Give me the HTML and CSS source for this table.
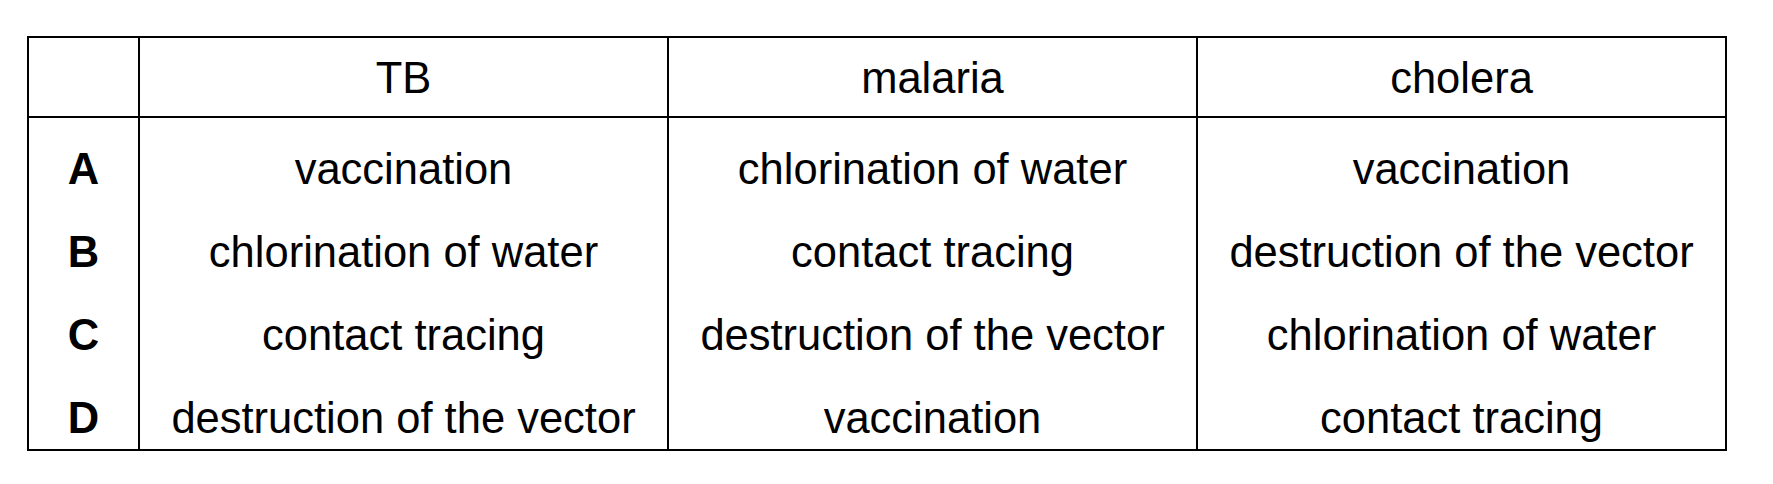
FILE: index.html
```html
<!DOCTYPE html>
<html lang="en">
<head>
<meta charset="utf-8">
<title>Disease control table</title>
<link rel="stylesheet" href="styles.css">
</head>
<body>
<div class="page">
  <div class="grid">
    <div class="cell head first"></div>
    <div class="cell head">TB</div>
    <div class="cell head">malaria</div>
    <div class="cell head">cholera</div>

    <div class="cell key first row1">A</div>
    <div class="cell row1">vaccination</div>
    <div class="cell row1">chlorination of water</div>
    <div class="cell row1">vaccination</div>

    <div class="cell key first">B</div>
    <div class="cell">chlorination of water</div>
    <div class="cell">contact tracing</div>
    <div class="cell">destruction of the vector</div>

    <div class="cell key first">C</div>
    <div class="cell">contact tracing</div>
    <div class="cell">destruction of the vector</div>
    <div class="cell">chlorination of water</div>

    <div class="cell key first last">D</div>
    <div class="cell last">destruction of the vector</div>
    <div class="cell last">vaccination</div>
    <div class="cell last">contact tracing</div>
  </div>
</div>
</body>
</html>
```
FILE: styles.css
```css
html, body {
  margin: 0;
  padding: 0;
  background: #ffffff;
}
.page {
  padding: 36px 0 0 27px;
}
.grid {
  display: grid;
  grid-template-columns: 109px 529px 529px 529px;
  width: 1700px;
  box-sizing: border-box;
  border: 2px solid #000;
  font-family: "Liberation Sans", Arial, sans-serif;
  font-size: 43.5px;
  line-height: 48px;
  color: #000;
}
.cell {
  box-sizing: border-box;
  text-align: center;
  white-space: nowrap;
  border-left: 2px solid #000;
  padding: 0;
  height: 83px;
  padding-top: 27px;
}
.cell.first {
  border-left: none;
}
.cell.head {
  height: 80px;
  padding-top: 16px;
  border-bottom: 2px solid #000;
}
.cell.last {
  height: 82px;
}
.key {
  font-weight: bold;
}
```
